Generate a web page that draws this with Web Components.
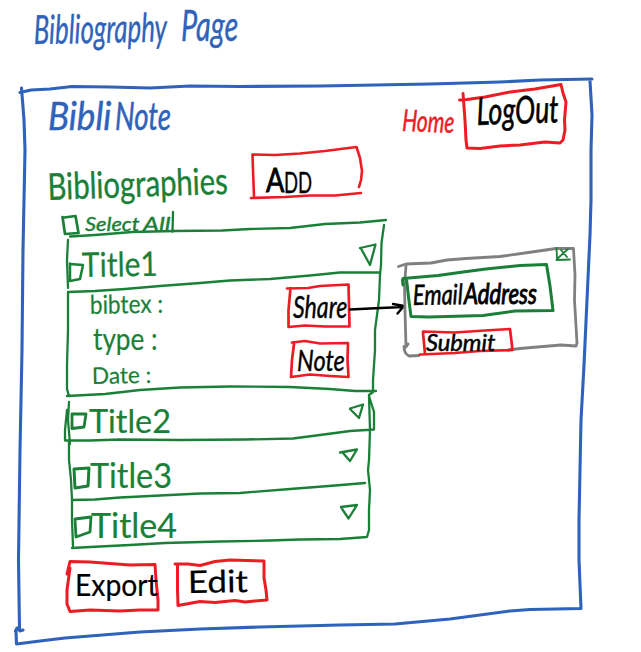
<!DOCTYPE html>
<html lang="en">
<head>
<meta charset="utf-8">
<title>Bibliography Page</title>
<style>
html,body{margin:0;background:#fff;overflow:hidden}
body{--blue:#2f62ba;--red:#ec1c24;--green:#1a7f37;--gray:#808080;--black:#000}
</style>
</head>
<body>
<bibliography-page></bibliography-page>
<script>
/* Handwritten-scale label: squeezes its text to the width given in "w". */
class InkText extends HTMLElement{
  connectedCallback(){
    const a=(n,d)=>this.getAttribute(n)||d;
    const s=+a('size',24),w=+a('w',80);
    const root=this.attachShadow({mode:'open'});
    root.innerHTML=`<style>
      :host{display:block;flex:none;width:${w}px;height:${s}px;color:var(--${a('color','green')});
        margin:${a('top',0)}px 0 0 ${a('left',0)}px}
      span{display:inline-block;white-space:pre;font:${a('slant','italic')} 400 ${s}px/${s}px Lato,"Liberation Sans",sans-serif;
        -webkit-text-stroke:${a('heavy',.2)}px currentColor;transform-origin:0 85%}
      </style><span><slot></slot></span>`;
    const span=root.querySelector('span');
    span.style.transform=`rotate(${a('rot',0)}deg) scaleX(${w/span.offsetWidth})`;
  }
}
customElements.define('ink-text',InkText);

/* Box outlined with loose pen strokes; "box" is x y w h on the sheet and "ink" is in sheet coordinates. */
class InkPanel extends HTMLElement{
  layout(){return 'display:flex;'}
  connectedCallback(){
    const box=this.getAttribute('box'),[x,y,w,h]=box.split(' ').map(Number);
    this.attachShadow({mode:'open'}).innerHTML=`<style>
      :host{position:relative;box-sizing:border-box;flex:none;align-items:flex-start;width:${w}px;height:${h}px;${this.layout()}}
      svg{position:absolute;left:0;top:0;width:${w}px;height:${h}px;overflow:visible;pointer-events:none}
      path{fill:none;stroke:var(--${this.getAttribute('color')||'green'});stroke-width:${this.getAttribute('pen')||2.3};stroke-linecap:round;stroke-linejoin:round}
      </style><svg viewBox="${box}" aria-hidden="true"><path d="${this.getAttribute('ink')||''}"/></svg><slot></slot>`;
  }
}
customElements.define('ink-panel',InkPanel);
customElements.define('ink-column',class extends InkPanel{layout(){return 'display:flex;flex-direction:column;'}});
customElements.define('ink-button',class extends InkPanel{});
customElements.define('ink-checkbox',class extends InkPanel{});
customElements.define('ink-toggle',class extends InkPanel{});
/* Arrow that overlies the neighbouring panels. */
customElements.define('ink-arrow',class extends InkPanel{layout(){return 'display:block;position:absolute;left:61px;top:16px;'}});

class ShareDialog extends HTMLElement{
  connectedCallback(){
    this.attachShadow({mode:'open'}).innerHTML=`<style>:host{display:block;margin:42px 0 0 16px}
      .top{display:flex;justify-content:flex-end;height:18px}
      .body{display:block;width:174px}
      ink-button,ink-panel.field{display:flex}
      .field{margin-left:7px}.send{margin:12px 0 0 20px}.close{margin-right:6px}
      </style>
      <ink-column box="403 248 175 108" color="gray" pen="2.8" ink="M398.5 266.5L406 264 431 263 447 260 466 258.5 500 256.5 525 253 556 248.5 573.5 248.5 575 275 574.5 300 577 343 576 346 561 345 520 348.5 508 350M406 266L404.5 285 405 311 406 347 408 344M404 346.5C404 352 406 354.5 409 356L419 355.5">
        <div class="body">
          <div class="top"><ink-toggle class="close" box="557 253 15 14" pen="1.8" ink="M557.5 253L558 264.5M557.5 265L571 264.5M562 255L568 262M569 254L558 264"></ink-toggle></div>
          <ink-panel class="field" box="411 266 144 52" pen="3" ink="M403.5 280L404 285M404 278.5L439 275.5 464 272 487 269 521 265.5 547.5 264.5 551 286 554 310.5 516 311 484 315.5 430 317 412 316.5 409.5 297 407.5 279">
            <ink-text color="black" left="3" top="14" size="28" w="50" heavy=".6" rot="-1">Email</ink-text>
            <ink-text color="black" left="1" top="13" size="28" w="73" heavy="1">Address</ink-text>
          </ink-panel>
          <ink-button class="send" box="423 330 91 25" color="red" pen="2.7" ink="M423 332.5L425 354M423 331.5L455 332.5 485 330.5 510 329 512.5 350 480 351 455 353 420 354.5">
            <ink-text color="black" left="3" top="1" size="23" w="69" heavy=".5">Submit</ink-text>
          </ink-button>
        </div>
      </ink-column>`;
  }
}
customElements.define('share-dialog',ShareDialog);

class BibliographyList extends HTMLElement{
  connectedCallback(){
    this.attachShadow({mode:'open'}).innerHTML=`<style>
      :host{display:block;width:326px;flex:none}
      .all{display:flex;height:30px;align-items:flex-start}
      .all ink-checkbox{margin-top:10px}
      ink-panel,ink-column{margin-left:4px}
      .facts{margin-left:0;width:223px}.actions{margin-left:0}
      ink-toggle{margin-left:auto}
      </style>
      <div class="all">
        <ink-checkbox box="62 216 17 18" pen="2.7" ink="M62.5 217L65 234 78.5 233 75.5 216 64 217.5"></ink-checkbox>
        <ink-text left="6" top="8" size="19" w="54" heavy=".4">Select</ink-text><ink-text left="4" top="8" size="19" w="28" heavy=".4">All</ink-text>
      </div>
      <ink-panel box="66 236 320 50" ink="M70 236.5L95 235 132 232 175 231 222 230.5 250 229 290 228 325 224 360 222.5 386 220M173 212L172.5 232M68 240L67 260 68 288M384 225L381.5 243 381 265 380 275M68 292L95 291 125 289 160 286 200 283 230 280.5 270 279 310 275.5 340 272.5 380 272.5">
        <ink-checkbox style="margin:27px 0 0 3px" box="69 263 15 18" pen="2.5" ink="M70 264L83 265 80 279 70 281 70 263.5"></ink-checkbox>
        <ink-text left="-2" top="11" size="34" w="76" slant="normal" rot="-1">Title1</ink-text>
        <ink-toggle style="margin-top:9px;margin-right:10px" box="360 245 16 21" ink="M360 248L375.5 244.5 370 265 361 248.5"></ink-toggle>
      </ink-panel>
      <ink-panel box="66 286 320 106" ink="M68 293L68 330 67 365 67 389 69 396M67 396L105 394 140 390 180 387.5 230 386.5 290 387 330 389 355 391 376 391M380 275L379 300 375 330 375 350 373 380 373 392 369 395">
        <ink-column class="facts" box="66 286 223 106">
          <ink-text left="24" top="5" size="26" w="73" rot="-1" slant="normal">bibtex :</ink-text>
          <ink-text left="27" top="6" size="31" w="65" slant="normal">type :</ink-text>
          <ink-text left="26" top="10" size="23" w="59" slant="normal" rot="-1">Date :</ink-text>
        </ink-column>
        <ink-column class="actions" box="289 286 61 100">
          <ink-button box="289 286 61 42" color="red" pen="2.7" ink="M287 288.5L308 288 320 286 348.5 284.5 349 305 349.5 326.5 325 326.5 305 325.5 288.5 327 288.5 310 290.5 288">
            <ink-text color="black" left="4" top="5" size="30" w="54" heavy=".4">Share</ink-text>
            <ink-arrow box="350 302 54 13" color="black" pen="2.4" ink="M350 309.5L370 308.5 403 307M393 304L404 306 397.5 313.5"></ink-arrow>
          </ink-button>
          <ink-button style="margin:14px 0 0 3px" box="292 342 57 36" color="red" pen="2.7" ink="M292 342.5L305 341 320 343.5 348 343 347.5 360 348.5 377 330 376 310 374.5 291 377 292 360 294 344">
            <ink-text color="black" left="5" top="4" size="28" w="48" heavy=".4">Note</ink-text>
          </ink-button>
        </ink-column>
      </ink-panel>
      <ink-panel box="66 392 320 49" ink="M69 402L68 420 70 444M67 410L65 430 65 440.5 90 440.5 120 439.5 180 440 245 439.5 293 438.5 320 435 350 431 374 429.5 374 412 369 396 370 430">
        <ink-checkbox style="margin:21px 0 0 6px" box="72 413 14 15" pen="2.8" ink="M72 414L86 414 84 427 72 428.5 72 414"></ink-checkbox>
        <ink-text left="3" top="13" size="32" w="82" slant="normal">Title2</ink-text>
        <ink-toggle style="margin-top:13px;margin-right:23px" box="350 405 13 13" ink="M350 408.5L363 404.5 359 418 350 409"></ink-toggle>
      </ink-panel>
      <ink-panel box="66 441 320 57" ink="M69 441L69 460 71 480 72 500M72 500L95 499.5 120 497.5 160 495.5 200 493.5 240 493 290 489 335 485.5 365 483M370 430L369 460 368 470 370 490">
        <ink-checkbox style="margin:27px 0 0 8px" box="74 468 15 20" pen="3" ink="M74 469L89 468 88 486 75 488 74 469"></ink-checkbox>
        <ink-text left="1" top="17" size="34" w="82" slant="normal">Title3</ink-text>
        <ink-toggle style="margin-top:9px;margin-right:28px" box="343 450 17 12" ink="M342 452.5L359 449.5 352 461 345 453"></ink-toggle>
      </ink-panel>
      <ink-panel box="66 498 320 50" ink="M72 499L72 520 73 546.5M72 548L90 547 130 545 165 543 220 541.5 270 540.5 300 539.5 340 539 367 537 369 530 369 510 370 490">
        <ink-checkbox style="margin:19px 0 0 9px" box="75 516 15 20" pen="2.8" ink="M75 518L91 516 90 531 76 536 75 518"></ink-checkbox>
        <ink-text left="1" top="10" size="34" w="86" slant="normal">Title4</ink-text>
        <ink-toggle style="margin-top:7px;margin-right:29px" box="341 505 16 14" ink="M341 507L357 505 348.5 518.5 341.5 508"></ink-toggle>
      </ink-panel>`;
  }
}
customElements.define('bibliography-list',BibliographyList);

class BibliographyPage extends HTMLElement{
  connectedCallback(){
    this.attachShadow({mode:'open'}).innerHTML=`<style>
      :host{display:flex;flex-direction:column;width:641px;height:652px}
      header,nav,.heading,.content,footer{display:flex;align-items:flex-start;box-sizing:border-box;width:570px}
      header{height:80px;padding-left:34px}
      nav{height:70px}.heading{height:56px}.content{height:354px}footer{height:60px}
      ink-column{margin-left:20px}
      </style>
      <header><ink-text color="blue" size="40" w="133" top="9" heavy=".4" rot="-1">Bibliography</ink-text>
        <ink-text color="blue" left="14" top="3" size="43" w="57" heavy=".4">Page</ink-text></header>
      <ink-column box="20 80 572 564" color="blue" pen="3.1" ink="M20 92.5L31 90 50 89 72 86.5 110 87 150 88 190 86 240 86.5 320 86 430 84 500 82 540 80 592 79M21.5 88L24 120 25 150 23 250 22 350 20 450 18.5 560 19.5 629M15.5 631L17 628 20 631 23 630M16 631L16.5 644 40 641 65 638 140 632 200 629 260 627 340 625 395 624 450 619 510 611 530 609.5 581 608.5M590 81L592 115 591 150 591 200 590 235 587 300 584 365 581 420 580 470 579 520 579 560 581 608.5">
        <nav><ink-text color="blue" left="28" top="16" size="39" w="63" heavy=".5">Bibli</ink-text><ink-text color="blue" left="4" top="16" size="38" w="56" heavy=".5">Note</ink-text>
          <ink-text color="red" left="231" top="24" size="30" w="52" heavy=".5" rot="2">Home</ink-text>
          <ink-button style="margin:7px 0 0 11px" box="465 87 100 60" color="red" pen="3" ink="M459.5 100L467 99.5 485 97 510 92 535 89 561 84.5 563 93 566 102 564.5 120 565 130 563 140 560 143 545 142 520 145 500 146 480 148.5 467 148 466 140 465 120 463 93.5">
            <ink-text color="black" left="12" top="4" size="38" w="82" heavy=".6" rot="-2">LogOut</ink-text></ink-button></nav>
        <div class="heading"><ink-text left="28" top="17" size="37" w="180" slant="normal" heavy=".4" rot="-2">Bibliographies</ink-text>
          <ink-button style="margin-left:24px" box="252 150 110 47" color="red" pen="2.6" ink="M254 196L253 170 252.5 154.5 275 155 300 153.5 325 151 356.5 147 360 158 362 171 361 180 359 187M251 198L285 197 310 195.5 335 195.5 361 193">
            <ink-text color="black" left="14" top="13" size="33" w="18" slant="normal" heavy=".9">A</ink-text><ink-text color="black" top="17" size="29" w="28" slant="normal" heavy=".4">DD</ink-text></ink-button></div>
        <div class="content"><bibliography-list style="margin-left:42px"></bibliography-list><share-dialog style="margin-left:15px"></share-dialog></div>
        <footer><ink-button style="margin-left:47px" box="67 560 92 52" color="red" pen="3" ink="M67 574L70 561.5 90 562 110 563.5 130 565 155 564.5 156 580 158 600 158 610 140 610 120 611 90 610 70 611.5 67 604 67 590 70 568">
            <ink-text color="black" left="8" top="9" size="31" w="83" slant="normal">Export</ink-text></ink-button>
          <ink-button style="margin-left:16px" box="175 560 93 46" color="red" pen="3" ink="M175 564L188 564 200 565.5 215 561.5 230 560 264 561 264 578 266 590 267 600 255 601 245 602 235 600.5 215 602.5 200 601.5 178 605.5 177.5 590 177.5 566">
            <ink-text color="black" left="13" top="6" size="31" w="60" slant="normal" rot="-1">Edit</ink-text></ink-button></footer>
      </ink-column>`;
  }
}
customElements.define('bibliography-page',BibliographyPage);
</script>
</body>
</html>
